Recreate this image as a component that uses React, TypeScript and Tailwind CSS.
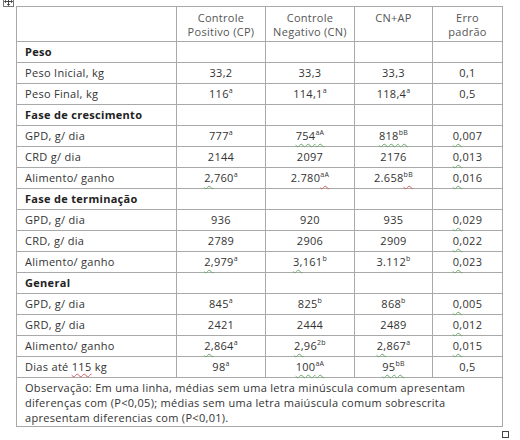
import React from 'react';

type Val = { v: string; sup?: string; wavy?: 'green' | 'red' | 'supred' | 'lead' };

type Row =
  | { kind: 'section'; label: string }
  | { kind: 'data'; label: React.ReactNode; cells: Val[] };

const rows: Row[] = [
  { kind: 'section', label: 'Peso' },
  { kind: 'data', label: 'Peso Inicial, kg', cells: [{ v: '33,2' }, { v: '33,3' }, { v: '33,3' }, { v: '0,1' }] },
  { kind: 'data', label: 'Peso Final, kg', cells: [{ v: '116', sup: 'a' }, { v: '114,1', sup: 'a' }, { v: '118,4', sup: 'a' }, { v: '0,5' }] },
  { kind: 'section', label: 'Fase de crescimento' },
  {
    kind: 'data',
    label: 'GPD, g/ dia',
    cells: [{ v: '777', sup: 'a' }, { v: '754', sup: 'aA', wavy: 'green' }, { v: '818', sup: 'bB', wavy: 'green' }, { v: '0,007', wavy: 'lead' }],
  },
  { kind: 'data', label: 'CRD g/ dia', cells: [{ v: '2144' }, { v: '2097' }, { v: '2176' }, { v: '0,013', wavy: 'lead' }] },
  {
    kind: 'data',
    label: 'Alimento/ ganho',
    cells: [{ v: '2,760', sup: 'a', wavy: 'lead' }, { v: '2.780', sup: 'aA', wavy: 'supred' }, { v: '2.658', sup: 'bB', wavy: 'supred' }, { v: '0,016', wavy: 'lead' }],
  },
  { kind: 'section', label: 'Fase de terminação' },
  { kind: 'data', label: 'GPD, g/ dia', cells: [{ v: '936' }, { v: '920' }, { v: '935' }, { v: '0,029', wavy: 'lead' }] },
  { kind: 'data', label: 'CRD, g/ dia', cells: [{ v: '2789' }, { v: '2906' }, { v: '2909' }, { v: '0,022', wavy: 'lead' }] },
  {
    kind: 'data',
    label: 'Alimento/ ganho',
    cells: [{ v: '2,979', sup: 'a', wavy: 'lead' }, { v: '3,161', sup: 'b', wavy: 'lead' }, { v: '3.112', sup: 'b' }, { v: '0,023', wavy: 'lead' }],
  },
  { kind: 'section', label: 'General' },
  { kind: 'data', label: 'GPD, g/ dia', cells: [{ v: '845', sup: 'a' }, { v: '825', sup: 'b' }, { v: '868', sup: 'b' }, { v: '0,005', wavy: 'lead' }] },
  { kind: 'data', label: 'GRD, g/ dia', cells: [{ v: '2421' }, { v: '2444' }, { v: '2489' }, { v: '0,012', wavy: 'lead' }] },
  {
    kind: 'data',
    label: 'Alimento/ ganho',
    cells: [{ v: '2,864', sup: 'a', wavy: 'lead' }, { v: '2,96', sup: '2b', wavy: 'lead' }, { v: '2,867', sup: 'a', wavy: 'lead' }, { v: '0,015', wavy: 'lead' }],
  },
  {
    kind: 'data',
    label: (
      <>
        Dias até <span className="underline decoration-wavy decoration-[#d06060] decoration-1 underline-offset-2">115</span> kg
      </>
    ),
    cells: [{ v: '98', sup: 'a' }, { v: '100', sup: 'aA', wavy: 'green' }, { v: '95', sup: 'bB', wavy: 'green' }, { v: '0,5' }],
  },
];

const green = 'underline decoration-wavy decoration-[#6aa86a] decoration-1 underline-offset-[3px]';
const red = 'underline decoration-wavy decoration-[#d06060] decoration-1 underline-offset-[3px]';

function Value({ c }: { c: Val }) {
  const sup = c.sup ? <sup className="text-[7px] top-[-0.7em]">{c.sup}</sup> : null;
  if (c.wavy === 'green') {
    return (
      <span className={green}>
        {c.v}
        {sup}
      </span>
    );
  }
  if (c.wavy === 'supred') {
    return (
      <span>
        {c.v}
        <span className={red}>{sup}</span>
      </span>
    );
  }
  if (c.wavy === 'lead') {
    return (
      <span>
        <span className={green}>{c.v.slice(0, 2)}</span>
        {c.v.slice(2)}
        {sup}
      </span>
    );
  }
  return (
    <span>
      {c.v}
      {sup}
    </span>
  );
}

const cell = 'border border-[#a9a9a9] px-2 py-0';
const head = 'border border-[#a9a9a9] px-1 font-normal align-top pt-[4px]';

export default function App() {
  return (
    <div
      className="relative w-[520px] h-[440px] bg-white text-[#333] text-[11px] leading-[14px] tracking-[0.3px]"
      style={{ fontFamily: '"Open Sans", "Liberation Sans", sans-serif' }}
    >
      {/* move handle */}
      <div className="absolute left-[3px] top-[-4px] w-[11px] h-[11px] border border-[#777] bg-white flex items-center justify-center">
        <svg width="9" height="9" viewBox="0 0 9 9" className="text-[#444]">
          <path d="M4.5 0.5V8.5M0.5 4.5H8.5" stroke="currentColor" strokeWidth="1" />
          <path d="M3 2L4.5 0.5L6 2M3 7L4.5 8.5L6 7M2 3L0.5 4.5L2 6M7 3L8.5 4.5L7 6" stroke="currentColor" strokeWidth="0.8" fill="none" />
        </svg>
      </div>

      <div className="pl-[16px] pt-[6px]">
        <table className="table-fixed border-collapse w-[486px]">
          <colgroup>
            <col className="w-[160px]" />
            <col className="w-[89px]" />
            <col className="w-[89px]" />
            <col className="w-[78px]" />
            <col className="w-[70px]" />
          </colgroup>
          <thead>
            <tr className="h-[35px] text-[#555]">
              <th className={head}></th>
              <th className={head}>
                Controle
                <br />
                Positivo (CP)
              </th>
              <th className={head}>
                Controle
                <br />
                Negativo (CN)
              </th>
              <th className={head}>CN+AP</th>
              <th className={head}>
                Erro
                <br />
                padrão
              </th>
            </tr>
          </thead>
          <tbody>
            {rows.map((r, i) =>
              r.kind === 'section' ? (
                <tr key={i} className="h-[21px]">
                  <td className={`${cell} font-bold text-[#222]`}>{r.label}</td>
                  <td className={cell}></td>
                  <td className={cell}></td>
                  <td className={cell}></td>
                  <td className={cell}></td>
                </tr>
              ) : (
                <tr key={i} className="h-[21px]">
                  <td className={cell}>{r.label}</td>
                  {r.cells.map((c, j) => (
                    <td key={j} className={`${cell} text-center`}>
                      <Value c={c} />
                    </td>
                  ))}
                </tr>
              ),
            )}
            <tr>
              <td colSpan={5} className={`${cell} pt-[2px] pb-[1px] leading-[15px]`}>
                Observação: Em uma linha, médias sem uma letra minúscula comum apresentam
                <br />
                diferenças com (P&lt;0,05); médias sem uma letra maiúscula comum sobrescrita
                <br />
                apresentam diferencias com (P&lt;0,01).
              </td>
            </tr>
          </tbody>
        </table>
      </div>

      {/* resize handle */}
      <div className="absolute left-[502px] top-[431px] w-[7px] h-[7px] border border-[#444] bg-white"></div>
    </div>
  );
}
